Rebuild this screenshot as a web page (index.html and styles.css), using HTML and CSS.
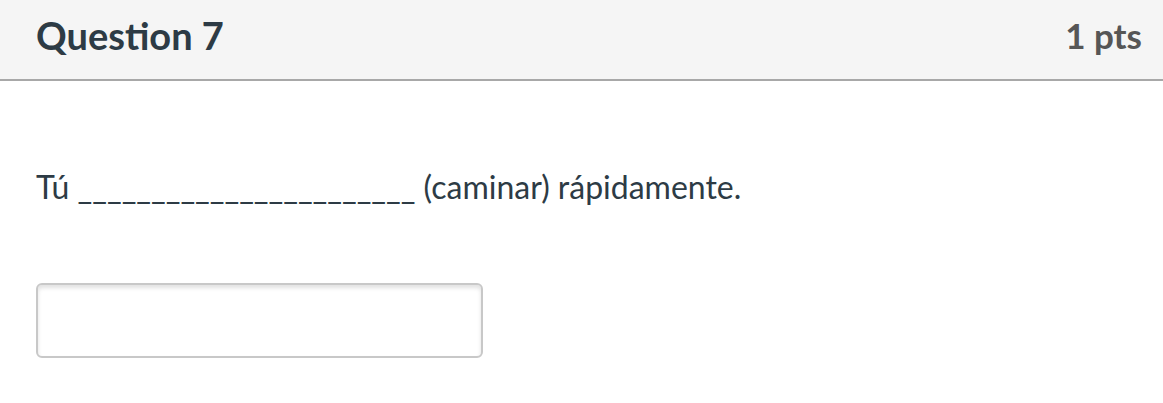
FILE: index.html
```html
<!DOCTYPE html>
<html>
<head>
<meta charset="utf-8">
<link rel="stylesheet" href="styles.css">
</head>
<body>
<div class="question">
  <div class="header">
    <div class="title">Question 7</div>
    <div class="pts">1 pts</div>
  </div>
  <div class="content">
    <p class="text">Tú <span class="blank">_______________________</span> (caminar) rápidamente.</p>
    <input class="answer" type="text">
  </div>
</div>
</body>
</html>
```
FILE: styles.css
```css
html, body {
  margin: 0;
  padding: 0;
  background: #fff;
}
.question {
  font-family: Lato, "Liberation Sans", sans-serif;
  width: 1163px;
}
.header {
  display: flex;
  justify-content: space-between;
  align-items: center;
  padding: 0 21px 0 36px;
  background: #f5f5f5;
  border-bottom: 2px solid #a8a8a8;
  box-sizing: border-box;
  height: 81px;
}
.title {
  font-weight: 700;
  font-size: 38px;
  color: #2d3b45;
  margin-top: -9px;
}
.pts {
  font-weight: 700;
  font-size: 35px;
  color: #565656;
  margin-top: -9px;
}
.content {
  padding: 0 36px;
}
.text {
  margin: 86px 0 0 0;
  font-size: 32px;
  line-height: 40px;
  color: #2d3b45;
}
.blank {
  letter-spacing: 0;
}
.answer {
  display: block;
  margin-top: 76px;
  width: 447px;
  height: 75px;
  box-sizing: border-box;
  border: 2px solid #c8c8c8;
  border-radius: 6px;
  box-shadow: inset 0 3px 4px rgba(0,0,0,0.12);
  background: #fff;
  outline: none;
}
```
